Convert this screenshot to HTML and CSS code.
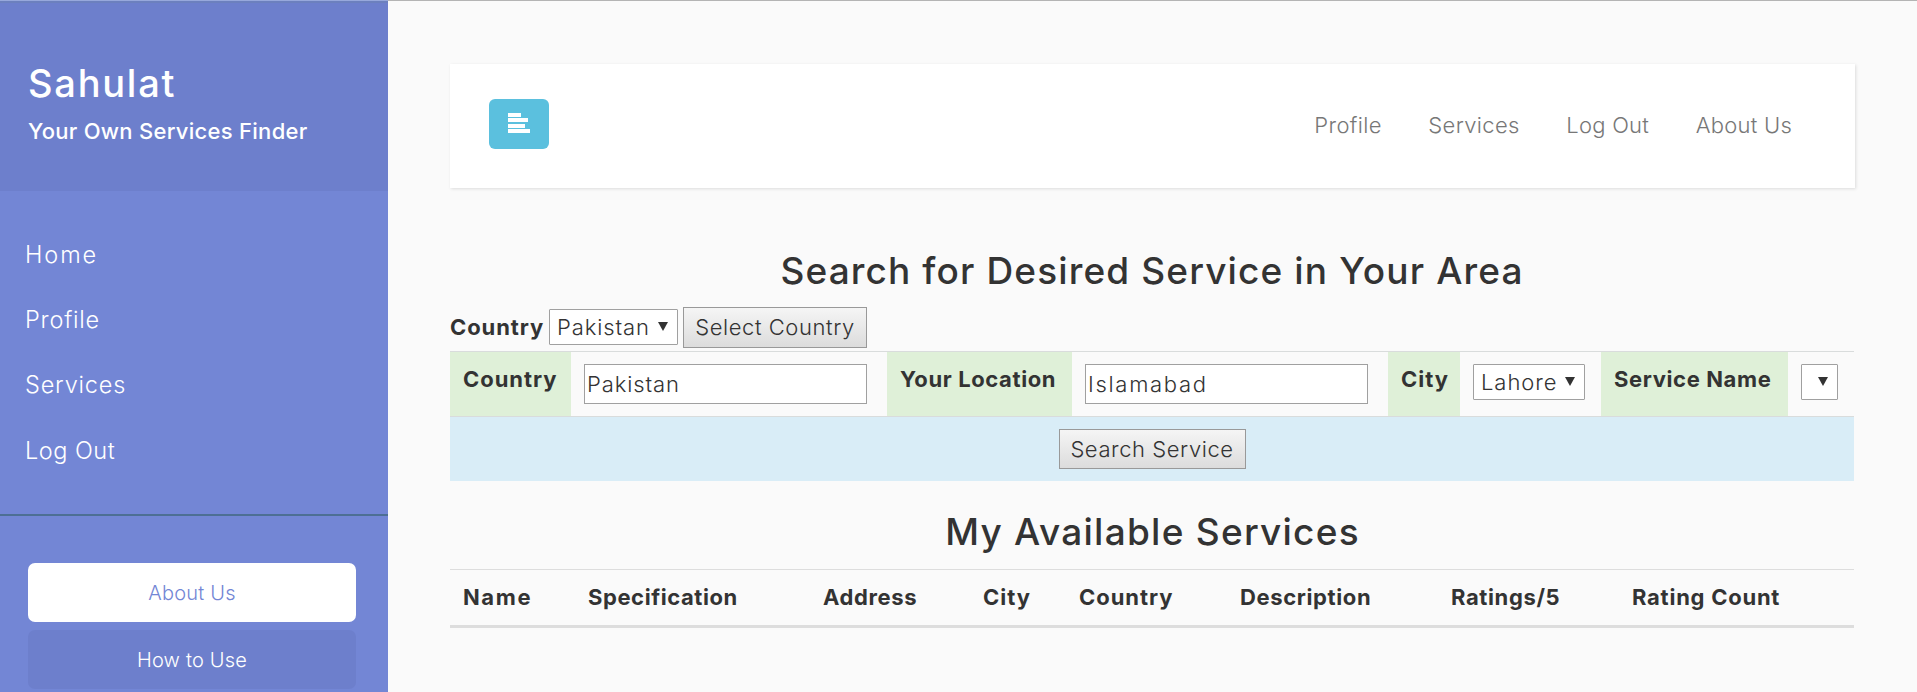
FILE: index.html
```html
<!DOCTYPE html>
<html lang="en">
<head>
<meta charset="utf-8">
<title>Sahulat</title>
<link rel="stylesheet" href="styles.css">
</head>
<body>
<div class="wrapper">
  <nav class="sidebar">
    <div class="brand">
      <h3 class="brand-name">Sahulat</h3>
      <div class="brand-tag">Your Own Services Finder</div>
    </div>
    <ul class="menu">
      <li class="menu-home">Home</li>
      <li>Profile</li>
      <li>Services</li>
      <li class="menu-out">Log Out</li>
    </ul>
    <div class="side-buttons">
      <a class="side-btn side-btn-light">About Us</a>
      <a class="side-btn">How to Use</a>
    </div>
  </nav>
  <main class="content">
    <div class="navbar">
      <button class="toggle" aria-label="Toggle sidebar">
        <svg width="22" height="20" viewBox="0 0 22 20" fill="#fff"><path d="M0 0h13v4H0zM0 5h20v4H0zM0 11h17v4H0zM0 16h22v4H0z"/></svg>
      </button>
      <div class="links">
        <a class="link-profile">Profile</a>
        <a class="link-services">Services</a>
        <a class="link-out">Log Out</a>
        <a class="link-about">About Us</a>
      </div>
    </div>
    <h2 class="title">Search for Desired Service in Your Area</h2>
    <div class="country-row">
      <b class="country-label">Country</b>
      <div class="select select-country"><span>Pakistan</span><i class="arrow"></i></div>
      <button class="btn btn-country">Select Country</button>
    </div>
    <table class="search">
      <colgroup><col class="c1"><col class="c2"><col class="c3"><col class="c4"><col class="c5"><col class="c6"><col class="c7"><col></colgroup>
      <tr>
        <th class="ls-country">Country</th>
        <td><input class="field field-country" value="Pakistan"></td>
        <th>Your Location</th>
        <td><input class="field field-location" value="Islamabad"></td>
        <th class="ls-country">City</th>
        <td><div class="select select-city"><span>Lahore</span><i class="arrow"></i></div></td>
        <th>Service Name</th>
        <td><div class="select select-service"><i class="arrow"></i></div></td>
      </tr>
      <tr class="submit">
        <td colspan="8"><button class="btn btn-search">Search Service</button></td>
      </tr>
    </table>
    <h2 class="title title-services">My Available Services</h2>
    <table class="services">
      <colgroup><col class="s1"><col class="s2"><col class="s3"><col class="s4"><col class="s5"><col class="s6"><col class="s7"><col></colgroup>
      <tr>
        <th class="ls-wide">Name</th><th class="ls-spec">Specification</th><th>Address</th><th class="ls-country">City</th>
        <th class="ls-country">Country</th><th>Description</th><th>Ratings/5</th><th class="ls-count">Rating Count</th>
      </tr>
    </table>
  </main>
</div>
</body>
</html>
```

FILE: styles.css
```css
* { box-sizing: border-box; }
body {
  margin: 0;
  background: #fafafa;
  color: #333;
  font: 300 22px/30px Inter, "Open Sans", sans-serif;
  overflow: hidden;
}
.wrapper { display: flex; height: 692px; border-top: 1px solid #b4b4b4; }
h2, h3, ul { margin: 0; padding: 0; font-weight: 500; }

.sidebar {
  width: 388px;
  flex: none;
  margin-top: -1px;
  background: #7386d5;
  color: #fff;
  border-top: 1px solid #97a8dc;
  overflow: hidden;
}
.brand { height: 190px; padding: 57px 0 0 28px; background: #6d7fcc; border-top: 2px solid #6c80be; }
.brand-name { margin-top: -2px; font-size: 38px; line-height: 50px; letter-spacing: 1.75px; }
.brand-tag { margin-top: 8px; font-weight: 500; letter-spacing: .28px; }
.menu {
  list-style: none;
  padding: 31px 0 31px 25px;
  border-bottom: 2px solid #4d6f94;
  font-size: 23.5px;
  font-weight: 300;
}
.menu li { line-height: 65.2px; letter-spacing: .8px; }
.menu .menu-home { letter-spacing: 1.9px; }
.menu .menu-out { letter-spacing: .5px; }
.side-buttons { display: flex; flex-direction: column; gap: 8px; padding: 47px 32px 0 28px; }
.side-btn {
  height: 59px;
  border-radius: 7px;
  background: #6d7fcc;
  font-size: 20px;
  line-height: 60px;
  letter-spacing: .2px;
  text-align: center;
}
.side-btn-light { background: #fff; color: #7386d5; }

.content { width: 1404px; margin-left: 62px; }
.navbar {
  display: flex;
  justify-content: space-between;
  align-items: center;
  height: 124px;
  margin-top: 63px;
  padding: 0 63px 2px 39px;
  width: 1405px;
  background: #fff;
  box-shadow: 1px 1px 3px rgba(0, 0, 0, .12);
}
.toggle {
  display: flex;
  width: 60px;
  height: 50px;
  margin-bottom: 2px;
  padding: 14px 0 0 19px;
  border: 0;
  border-radius: 6px;
  background: #5bc0de;
}
.links { display: flex; gap: 46.5px; color: #777; }
.link-profile { letter-spacing: .35px; }
.link-services { letter-spacing: .35px; }
.link-out, .link-about { letter-spacing: .25px; }

.title { margin-top: 58px; font-size: 37px; line-height: 50px; letter-spacing: 1.13px; text-align: center; }
.country-row { display: flex; align-items: center; height: 41px; margin: 11px 0 3px; }
.country-label { width: 99px; margin-top: -1px; font-weight: 700; letter-spacing: .9px; }
.select {
  display: flex;
  align-items: center;
  justify-content: space-between;
  height: 36px;
  padding: 0 9px 0 7px;
  border: 1px solid #a0a0a0;
  border-radius: 1px;
  background: #fff;
}
.arrow { width: 10px; height: 9px; margin: 0 0 1px auto; background: #333; clip-path: polygon(0 0, 100% 0, 50% 100%); }
.select-country { width: 129px; margin-bottom: 1px; letter-spacing: .9px; }
.select-city { width: 112px; letter-spacing: .95px; }
.select-service { width: 37px; }
.btn {
  height: 41px;
  padding: 0 0 1px;
  border: 1px solid #999;
  background: linear-gradient(#f5f5f5, #dcdcdc);
  color: #333;
  font: inherit;
  letter-spacing: .57px;
}
.btn-country { width: 184px; margin-left: 5px; }
.btn-search { width: 187px; height: 40px; padding: 0; }

table { width: 1404px; table-layout: fixed; border-collapse: separate; border-spacing: 0; }
th { text-align: left; vertical-align: top; font-weight: 700; letter-spacing: .62px; white-space: nowrap; }
td { vertical-align: top; }
.search th, .search td { height: 65px; padding: 12px 0 0 12px; border-top: 1px solid #d9dcdc; }
.search th { padding-left: 13px; background: #dff0d8; }
.search .ls-country, .services .ls-country { letter-spacing: .95px; }
.c1 { width: 121px; }
.c2 { width: 316px; }
.c3 { width: 185px; }
.c4 { width: 316px; }
.c5 { width: 72px; }
.c6 { width: 141px; }
.c7 { width: 187px; }
.field {
  display: block;
  width: 283px;
  height: 40px;
  padding: 0 2px;
  border: 1px solid #a0a0a0;
  background: #fff;
  color: #333;
  font: inherit;
}
.search td .select, .search .field { margin-left: 1px; }
.field-country { letter-spacing: .9px; }
.field-location { letter-spacing: 1.7px; }
.search .submit td { padding-left: 0; background: #d9edf7; text-align: center; }
.title-services { margin-top: 26px; padding-left: 1px; letter-spacing: 1.25px; }
.services { margin-top: 12px; }
.services th { height: 59px; padding: 12px 0 0 13px; border-top: 1px solid #ddd; border-bottom: 3px solid #ddd; }
.services .ls-wide { letter-spacing: 1.6px; }
.services .ls-spec { letter-spacing: .58px; }
.services .ls-count { letter-spacing: .75px; }
.s1 { width: 125px; }
.s2 { width: 235px; }
.s3 { width: 160px; }
.s4 { width: 96px; }
.s5 { width: 161px; }
.s6 { width: 211px; }
.s7 { width: 181px; }
```
